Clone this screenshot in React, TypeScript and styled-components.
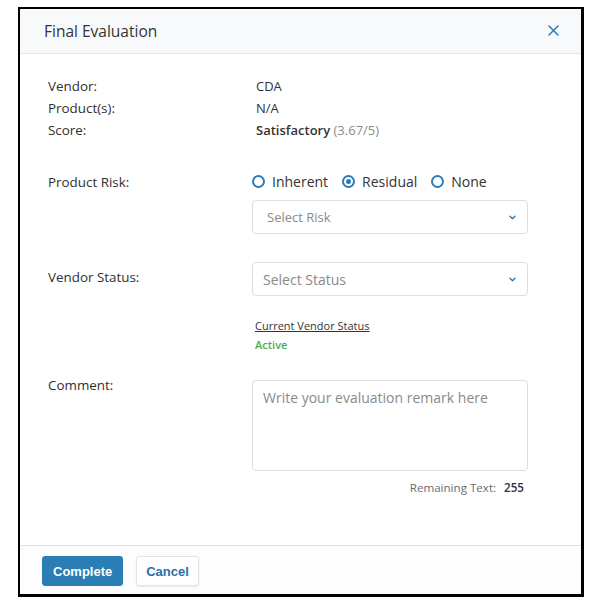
import React, { useState } from 'react';
import styled, { createGlobalStyle } from 'styled-components';

const GlobalStyle = createGlobalStyle`
  * { box-sizing: border-box; }
  body {
    margin: 0;
    background: #ffffff;
    font-family: "Open Sans", "Noto Sans", sans-serif;
    color: #333333;
  }
`;

const Modal = styled.div`
  margin: 7px 0 0 18px;
  width: 566px;
  height: 590px;
  background: #ffffff;
  border-style: solid;
  border-color: #000000;
  border-width: 2px 3px 3px 2px;
  display: flex;
  flex-direction: column;
`;

const Header = styled.header`
  height: 45px;
  flex-shrink: 0;
  background: #f7f9fb;
  border-bottom: 1px solid #e2e7eb;
  display: flex;
  align-items: center;
  justify-content: space-between;
  padding: 0 21px 1px 24px;
`;

const Title = styled.h2`
  margin: 0;
  font-size: 15.5px;
  font-weight: 500;
  color: #333333;
`;

const CloseButton = styled.button`
  border: none;
  background: transparent;
  padding: 0;
  width: 14px;
  height: 14px;
  display: flex;
  align-items: center;
  justify-content: center;
  cursor: pointer;
  color: #2b7bb9;
`;

const Body = styled.div`
  flex: 1;
  padding: 21px 53px 0 28px;
  display: flex;
  flex-direction: column;
`;

const Row = styled.div<{ $mt?: number }>`
  display: grid;
  grid-template-columns: 204px 1fr;
  margin-top: ${(p) => p.$mt ?? 0}px;
`;

// $shift nudges a label up or down against the control beside it
const Label = styled.div<{ $shift?: number }>`
  font-size: 13.4px;
  font-weight: 500;
  line-height: 22px;
  margin-top: ${(p) => p.$shift ?? 0}px;
  color: #2f2f2f;
`;

const Value = styled.div`
  font-size: 13px;
  line-height: 22px;
  padding-left: 4px;
  color: #333333;
`;

const Strong = styled.span`
  font-weight: 600;
`;

const Muted = styled.span`
  color: #8c8c8c;
`;

const Field = styled.div`
  display: flex;
  flex-direction: column;
`;

const RadioGroup = styled.div`
  display: flex;
  align-items: center;
  height: 22px;
  gap: 14px;
`;

const RadioOption = styled.label`
  display: flex;
  align-items: center;
  gap: 7px;
  font-size: 14px;
  color: #333333;
  cursor: pointer;
`;

const RadioCircle = styled.span<{ $checked: boolean }>`
  width: 13px;
  height: 13px;
  border-radius: 50%;
  border: 2px solid #2b7bb9;
  display: flex;
  align-items: center;
  justify-content: center;
  &::after {
    content: '';
    width: 5px;
    height: 5px;
    border-radius: 50%;
    background: #2b7bb9;
    display: ${(p) => (p.$checked ? 'block' : 'none')};
  }
`;

const SelectBox = styled.div<{ $pl: number; $fs: number; $mt?: number }>`
  margin-top: ${(p) => p.$mt ?? 0}px;
  height: 34px;
  border: 1px solid #dcdfe2;
  border-radius: 4px;
  display: flex;
  align-items: center;
  justify-content: space-between;
  padding: 0 11px 0 ${(p) => p.$pl}px;
  font-size: ${(p) => p.$fs}px;
  color: #8a8a8a;
  cursor: pointer;
`;

const StatusCaption = styled.div`
  margin-top: 21px;
  padding-left: 3px;
  font-size: 11px;
  line-height: 18px;
  color: #333333;
  text-decoration: underline;
`;

const StatusValue = styled.div`
  padding-left: 3px;
  font-size: 11px;
  line-height: 20px;
  font-weight: 600;
  color: #4cae4f;
`;

const TextArea = styled.textarea`
  height: 91px;
  resize: none;
  border: 1px solid #dcdfe2;
  border-radius: 4px;
  padding: 7px 10px;
  font-family: "Open Sans", "Noto Sans", sans-serif;
  font-size: 14px;
  line-height: 20px;
  color: #333333;
  outline: none;
  &::placeholder {
    color: #8a8a8a;
  }
`;

const Counter = styled.div`
  margin-top: 9px;
  padding-right: 4px;
  display: flex;
  justify-content: flex-end;
  gap: 8px;
  font-size: 11.6px;
  line-height: 16px;
  color: #6b6b6b;
`;

const CounterNumber = styled.span`
  font-weight: 600;
  color: #333333;
`;

const Footer = styled.footer`
  flex-shrink: 0;
  height: 49px;
  border-top: 1px solid #dde2e6;
  background: #fdfdfd;
  display: flex;
  align-items: flex-start;
  gap: 13px;
  padding: 10px 0 0 22px;
`;

const Button = styled.button<{ $primary?: boolean }>`
  height: 30px;
  padding: 0 ${(p) => (p.$primary ? 10 : 9)}px;
  border-radius: 3px;
  font-family: "Liberation Sans", Arial, sans-serif;
  font-size: 13px;
  font-weight: 700;
  cursor: pointer;
  border: 1px solid ${(p) => (p.$primary ? '#2a7db5' : '#e1e4e7')};
  background: ${(p) => (p.$primary ? '#2a7db5' : '#ffffff')};
  color: ${(p) => (p.$primary ? '#ffffff' : '#2a70a8')};
  box-shadow: ${(p) => (p.$primary ? 'none' : '0 1px 2px rgba(0,0,0,0.08)')};
`;

const Chevron = () => (
  <svg width="7" height="5" viewBox="0 0 7 5" fill="none">
    <path d="M1 1.2l2.5 2.5L6 1.2" stroke="#2b7bb9" strokeWidth="1.4" strokeLinecap="round" strokeLinejoin="round" />
  </svg>
);

const CloseIcon = () => (
  <svg width="11" height="11" viewBox="0 0 11 11" fill="none">
    <path d="M1 1l9 9M10 1l-9 9" stroke="currentColor" strokeWidth="1.5" strokeLinecap="round" />
  </svg>
);

const riskOptions = ['Inherent', 'Residual', 'None'];

export default function App() {
  const [risk, setRisk] = useState('Residual');
  const [comment, setComment] = useState('');

  return (
    <>
      <GlobalStyle />
      <Modal>
        <Header>
          <Title>Final Evaluation</Title>
          <CloseButton aria-label="Close">
            <CloseIcon />
          </CloseButton>
        </Header>
        <Body>
          <Row>
            <Label>Vendor:</Label>
            <Value>CDA</Value>
          </Row>
          <Row>
            <Label>Product(s):</Label>
            <Value>N/A</Value>
          </Row>
          <Row>
            <Label>Score:</Label>
            <Value>
              <Strong>Satisfactory</Strong> <Muted>(3.67/5)</Muted>
            </Value>
          </Row>

          <Row $mt={29}>
            <Label $shift={1}>Product Risk:</Label>
            <Field>
              <RadioGroup>
                {riskOptions.map((opt) => (
                  <RadioOption key={opt} onClick={() => setRisk(opt)}>
                    <RadioCircle $checked={risk === opt} />
                    {opt}
                  </RadioOption>
                ))}
              </RadioGroup>
              <SelectBox $pl={14} $fs={13} $mt={8}>
                Select Risk
                <Chevron />
              </SelectBox>
            </Field>
          </Row>

          <Row $mt={28}>
            <Label $shift={4}>Vendor Status:</Label>
            <Field>
              <SelectBox $pl={10} $fs={14}>
                Select Status
                <Chevron />
              </SelectBox>
              <StatusCaption>Current Vendor Status</StatusCaption>
              <StatusValue>Active</StatusValue>
            </Field>
          </Row>

          <Row $mt={25}>
            <Label $shift={-6}>Comment:</Label>
            <Field>
              <TextArea
                placeholder="Write your evaluation remark here"
                maxLength={255}
                value={comment}
                onChange={(e) => setComment(e.target.value)}
              />
              <Counter>
                Remaining Text: <CounterNumber>{255 - comment.length}</CounterNumber>
              </Counter>
            </Field>
          </Row>
        </Body>
        <Footer>
          <Button $primary>Complete</Button>
          <Button>Cancel</Button>
        </Footer>
      </Modal>
    </>
  );
}
